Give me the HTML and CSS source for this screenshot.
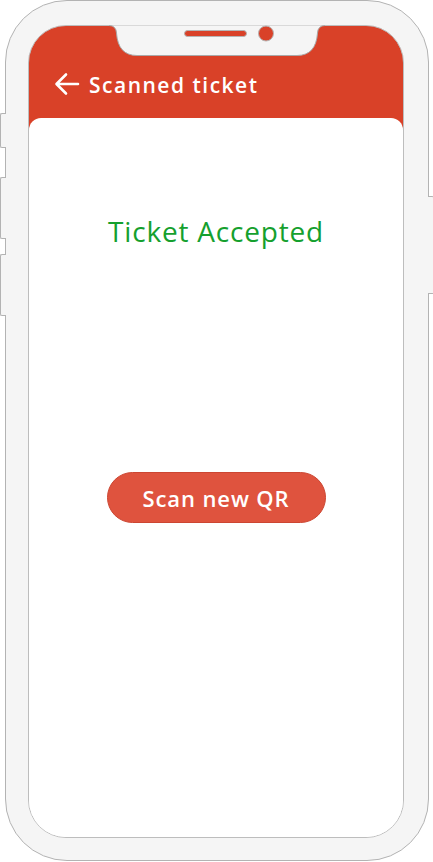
FILE: index.html
```html
<!DOCTYPE html>
<html lang="en">
<head>
<meta charset="utf-8">
<title>Scanned ticket</title>
<link rel="stylesheet" href="styles.css">
</head>
<body>
<div class="device">
  <span class="side-btn side-btn-1"></span>
  <span class="side-btn side-btn-2"></span>
  <span class="side-btn side-btn-3"></span>
  <span class="side-btn-right"></span>
  <div class="screen">
    <header class="app-header">
      <svg class="back-icon" width="26" height="24" viewBox="0 0 26 24" aria-hidden="true">
        <path d="M24 12H3M12 2.5L2.5 12L12 21.5" fill="none" stroke="#fff" stroke-width="2.6" stroke-linecap="round" stroke-linejoin="round"/>
      </svg>
      <h1 class="app-title">Scanned ticket</h1>
    </header>
    <main class="panel">
      <p class="status">Ticket Accepted</p>
      <button class="scan-btn" type="button">Scan new QR</button>
    </main>
  </div>
  <svg class="notch" width="216" height="32" viewBox="0 0 216 32" aria-hidden="true">
    <path d="M0,0.5 Q7,0.5 7.5,8 Q9,30.5 28,30.5 L188,30.5 Q207,30.5 208.5,8 Q209,0.5 216,0.5 Z" fill="#f5f5f5"/>
    <path d="M0,0.5 Q7,0.5 7.5,8 Q9,30.5 28,30.5 L188,30.5 Q207,30.5 208.5,8 Q209,0.5 216,0.5" fill="none" stroke="#a9a9a9" stroke-width="1"/>
    <rect x="75.5" y="5.5" width="62" height="6" rx="3" fill="#d94128" stroke="#b5b5b5" stroke-width="1"/>
    <circle cx="157" cy="8.5" r="7.5" fill="#d94128" stroke="#b5b5b5" stroke-width="1"/>
  </svg>
</div>
</body>
</html>
```

FILE: styles.css
```css
* { box-sizing: border-box; }

html, body {
  margin: 0;
  padding: 0;
  background: #ffffff;
}

body {
  padding-left: 5px;
  font-family: "Open Sans", "Liberation Sans", sans-serif;
}

.device {
  position: relative;
  width: 424px;
  height: 861px;
  display: flex;
  padding: 24px 24px 22px 22px;
  background: #f5f5f5;
  border: 1px solid #b3b3b3;
  border-radius: 62px;
}

.side-btn {
  position: absolute;
  left: -6px;
  width: 6px;
  background: #f5f5f5;
  border: 1px solid #b3b3b3;
  border-right: none;
  border-radius: 2px 0 0 2px;
}
.side-btn-1 { top: 112px; height: 35px; }
.side-btn-2 { top: 176px; height: 62px; }
.side-btn-3 { top: 253px; height: 62px; }

.side-btn-right {
  position: absolute;
  right: -6px;
  top: 195px;
  width: 6px;
  height: 98px;
  background: #f5f5f5;
  border: 1px solid #b3b3b3;
  border-left: none;
  border-radius: 0 2px 2px 0;
}

.screen {
  flex: 1;
  display: flex;
  flex-direction: column;
  overflow: hidden;
  background: linear-gradient(#d94128 0 50%, #ffffff 50% 100%);
  border: 1px solid #bdbdbd;
  border-radius: 38px;
}

.notch {
  position: absolute;
  left: 103px;
  top: 24px;
}

.app-header {
  height: 92px;
  flex: none;
  display: flex;
  align-items: center;
  gap: 9px;
  padding: 25px 0 0 25px;
}

.back-icon { flex: none; margin-top: -1px; }

.app-title {
  margin: 0;
  color: #ffffff;
  font-family: "Open Sans", sans-serif;
  font-weight: 600;
  font-size: 21px;
  letter-spacing: 1.5px;
}

.panel {
  flex: 1;
  display: flex;
  flex-direction: column;
  align-items: center;
  background: #ffffff;
  border-radius: 12px 12px 0 0;
}

.status {
  margin: 94px 0 0;
  color: #15a02e;
  font-family: "Open Sans", sans-serif;
  font-size: 28px;
  font-weight: 400;
  line-height: 38px;
  letter-spacing: 0.8px;
}

.scan-btn {
  margin-top: 222px;
  width: 219px;
  height: 51px;
  border: 1px solid #cc4632;
  border-radius: 26px;
  background: #df533e;
  color: #ffffff;
  font-family: "Open Sans", sans-serif;
  font-weight: 600;
  font-size: 22px;
  letter-spacing: 0.9px;
  cursor: pointer;
}
```
